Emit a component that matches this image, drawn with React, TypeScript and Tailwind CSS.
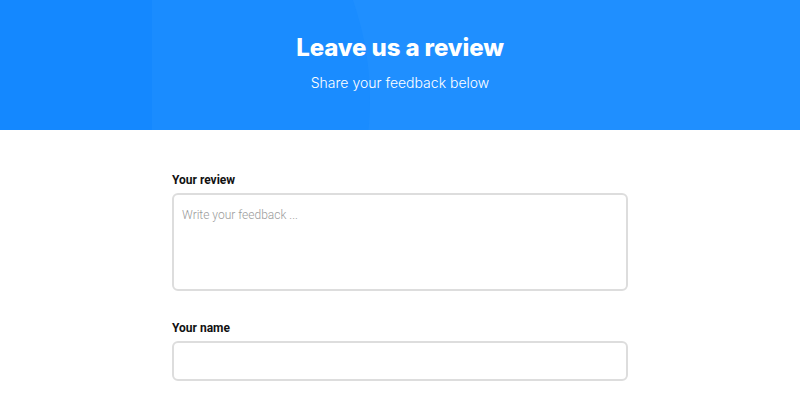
export default function App() {
  return (
    <div className="min-h-screen bg-white" style={{ fontFamily: 'Roboto, "Liberation Sans", sans-serif' }}>
      {/* header */}
      <div className="relative h-[130px] overflow-hidden bg-[#1f8fff]">
        <div className="absolute left-[-230px] top-[-200px] h-[600px] w-[600px] rounded-full bg-[#1a8cff]" />
        <div className="absolute left-0 top-0 h-full w-[152px] bg-[#1488ff]" />
        <div className="relative flex h-full flex-col items-center pt-[31px] text-white">
          <h1 className="font-['Inter',sans-serif] text-[24px] font-extrabold leading-[34px] tracking-[-0.1px]">Leave us a review</h1>
          <p className="mt-[8px] font-['Inter',sans-serif] text-[14px] font-light leading-[20px]">Share your feedback below</p>
        </div>
      </div>

      {/* form */}
      <div className="mx-auto w-[456px] pt-[43px]">
        <label className="block text-[12px] font-bold leading-[14px] text-[#111]">Your review</label>
        <textarea
          placeholder="Write your feedback ..."
          className="mt-[6px] block h-[98px] w-full resize-none rounded-[6px] border-2 border-[#dddddd] px-[8px] py-[11px] text-[12px] font-light text-[#333] placeholder:text-[#9a9a9a] outline-none"
        />
        <label className="mt-[30px] block text-[12px] font-bold leading-[14px] text-[#111]">Your name</label>
        <input
          type="text"
          className="mt-[6px] block h-[40px] w-full rounded-[6px] border-2 border-[#dddddd] px-[8px] text-[12px] outline-none"
        />
      </div>
    </div>
  );
}
